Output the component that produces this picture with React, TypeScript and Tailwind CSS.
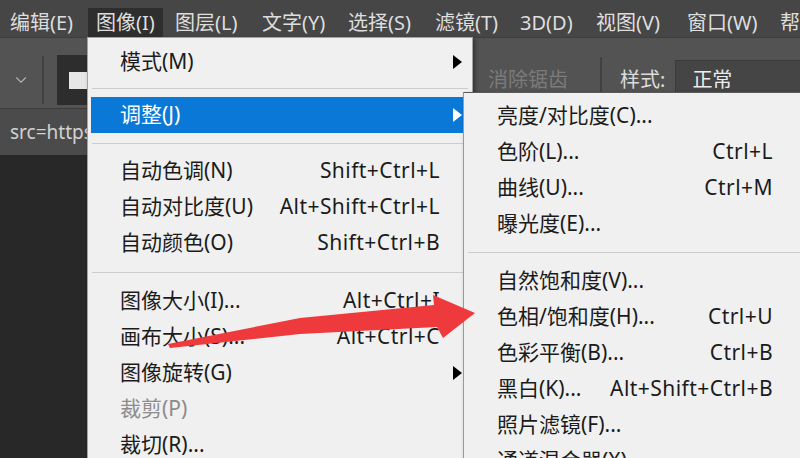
import { ChevronDown } from "lucide-react";

type Row =
  | { sep: number }
  | {
      label: string;
      sc?: string;
      arrow?: boolean;
      active?: boolean;
      disabled?: boolean;
    };

// [label, slot width]
const topMenus: [string, number][] = [
  ["编辑(E)", 86],
  ["图像(I)", 79],
  ["图层(L)", 87],
  ["文字(Y)", 86],
  ["选择(S)", 87],
  ["滤镜(T)", 85],
  ["3D(D)", 76],
  ["视图(V)", 91],
  ["窗口(W)", 93],
  ["帮助(H)", 90],
];

const imageMenu: Row[] = [
  { label: "模式(M)", arrow: true },
  { sep: 17 },
  { label: "调整(J)", arrow: true, active: true },
  { sep: 20 },
  { label: "自动色调(N)", sc: "Shift+Ctrl+L" },
  { label: "自动对比度(U)", sc: "Alt+Shift+Ctrl+L" },
  { label: "自动颜色(O)", sc: "Shift+Ctrl+B" },
  { sep: 22 },
  { label: "图像大小(I)...", sc: "Alt+Ctrl+I" },
  { label: "画布大小(S)...", sc: "Alt+Ctrl+C" },
  { label: "图像旋转(G)", arrow: true },
  { label: "裁剪(P)", disabled: true },
  { label: "裁切(R)..." },
];

const adjustMenu: Row[] = [
  { label: "亮度/对比度(C)..." },
  { label: "色阶(L)...", sc: "Ctrl+L" },
  { label: "曲线(U)...", sc: "Ctrl+M" },
  { label: "曝光度(E)..." },
  { sep: 21 },
  { label: "自然饱和度(V)..." },
  { label: "色相/饱和度(H)...", sc: "Ctrl+U" },
  { label: "色彩平衡(B)...", sc: "Ctrl+B" },
  { label: "黑白(K)...", sc: "Alt+Shift+Ctrl+B" },
  { label: "照片滤镜(F)..." },
  { label: "通道混合器(X)..." },
];

function Separator({ h }: { h: number }) {
  return (
    <div className="flex items-center mx-[4px]" style={{ height: h }}>
      <div className="h-px w-full bg-[#cdcdcd]" />
    </div>
  );
}

function MenuRow({ row, withArrowCol }: { row: Exclude<Row, { sep: number }>; withArrowCol: boolean }) {
  return (
    <div
      className={`h-9 mx-[3px] flex items-center ${
        withArrowCol ? "pl-[29px] pr-[7px]" : "pl-[30px] pr-[32px]"
      } ${row.active ? "bg-[#0a78d6] text-white" : row.disabled ? "text-[#8c8c8c]" : "text-[#1b1b1b]"}`}
    >
      <span className="whitespace-nowrap">{row.label}</span>
      <span className="flex-1" />
      {row.sc && <span className="whitespace-nowrap tracking-[0.45px]">{row.sc}</span>}
      {withArrowCol && (
        <span className="w-[10px] ml-[12px] flex items-center justify-end">
          {row.arrow && (
            <span
              className={`w-0 h-0 border-y-[7px] border-y-transparent border-l-[9px] ${
                row.active ? "border-l-white" : "border-l-black"
              }`}
            />
          )}
        </span>
      )}
    </div>
  );
}

export default function App() {
  return (
    <div className="relative w-[800px] h-[458px] overflow-hidden bg-[#282828] flex flex-col font-['Noto_Sans','Noto_Sans_CJK_SC',sans-serif]">
      {/* menu bar */}
      <div className="h-[37px] shrink-0 bg-[#464646] flex items-end pl-[2px] text-[20px] text-[#dedede]">
        {topMenus.map(([m, w]) => (
          <div key={m} className="h-[29px] shrink-0" style={{ width: w }}>
            <div
              className={`h-full pl-[8px] flex items-center whitespace-nowrap ${
                m === "图像(I)" ? "w-[75px] bg-[#2e2e2e]" : ""
              }`}
            >
              {m}
            </div>
          </div>
        ))}
      </div>

      {/* options bar */}
      <div className="h-[71px] shrink-0 bg-[#535353] border-t border-[#3e3e3e] pt-[14px] flex items-center">
        <ChevronDown className="ml-[12px] shrink-0 text-[#b0b0b0]" size={18} strokeWidth={1.5} />
        <div className="ml-[12px] shrink-0 h-[48px] w-[2px] bg-[#414141]" />
        <div className="ml-[13px] shrink-0 h-[50px] w-[46px] bg-[#2d2d2d] flex items-center">
          <div className="ml-[12px] h-[17px] w-[20px] bg-[#e6e6e6]" />
        </div>
        <span className="ml-[385px] shrink-0 text-[20px] text-[#7b7b7b] whitespace-nowrap">消除锯齿</span>
        <div className="ml-[32px] shrink-0 h-[46px] w-[2px] bg-[#414141]" />
        <span className="ml-[18px] shrink-0 text-[20px] text-[#dcdcdc] whitespace-nowrap">样式:</span>
        <div className="ml-[10px] h-[40px] w-[130px] shrink-0 bg-[#454545] border border-[#3a3a3a] flex items-center pl-[16px] text-[20px] text-[#ececec]">
          正常
        </div>
      </div>

      {/* document tab */}
      <div className="h-[47px] shrink-0 bg-[#4b4b4b] border-t border-[#3c3c3c] flex items-center pl-[10px] text-[19px] text-[#d2d2d2]">
        src=https://
      </div>

      <div className="flex-1 bg-[#282828]" />

      {/* 图像 menu */}
      <div className="absolute left-[87px] top-[37px] w-[386px] bg-[#f0f0f0] border border-[#a3a3a3] pt-[6px] text-[21px] shadow-[2px_2px_4px_rgba(0,0,0,0.4)]">
        {imageMenu.map((r, i) =>
          "sep" in r ? <Separator key={i} h={r.sep} /> : <MenuRow key={i} row={r} withArrowCol />
        )}
      </div>

      {/* 调整 submenu */}
      <div className="absolute left-[463px] top-[92px] w-[346px] bg-[#f0f0f0] border border-[#9a9a9a] border-t-[#5a5a5a] pt-[5px] text-[21px] shadow-[2px_2px_4px_rgba(0,0,0,0.4)]">
        {adjustMenu.map((r, i) =>
          "sep" in r ? <Separator key={i} h={r.sep} /> : <MenuRow key={i} row={r} withArrowCol={false} />
        )}
      </div>

      {/* red annotation arrow */}
      <svg className="absolute inset-0 pointer-events-none" width="800" height="458" viewBox="0 0 800 458">
        <polygon
          points="168,344 300,318 434,305 433,295 475,313 443,338 437,327 300,334 170,348"
          fill="#ee3a3d"
        />
      </svg>
    </div>
  );
}
